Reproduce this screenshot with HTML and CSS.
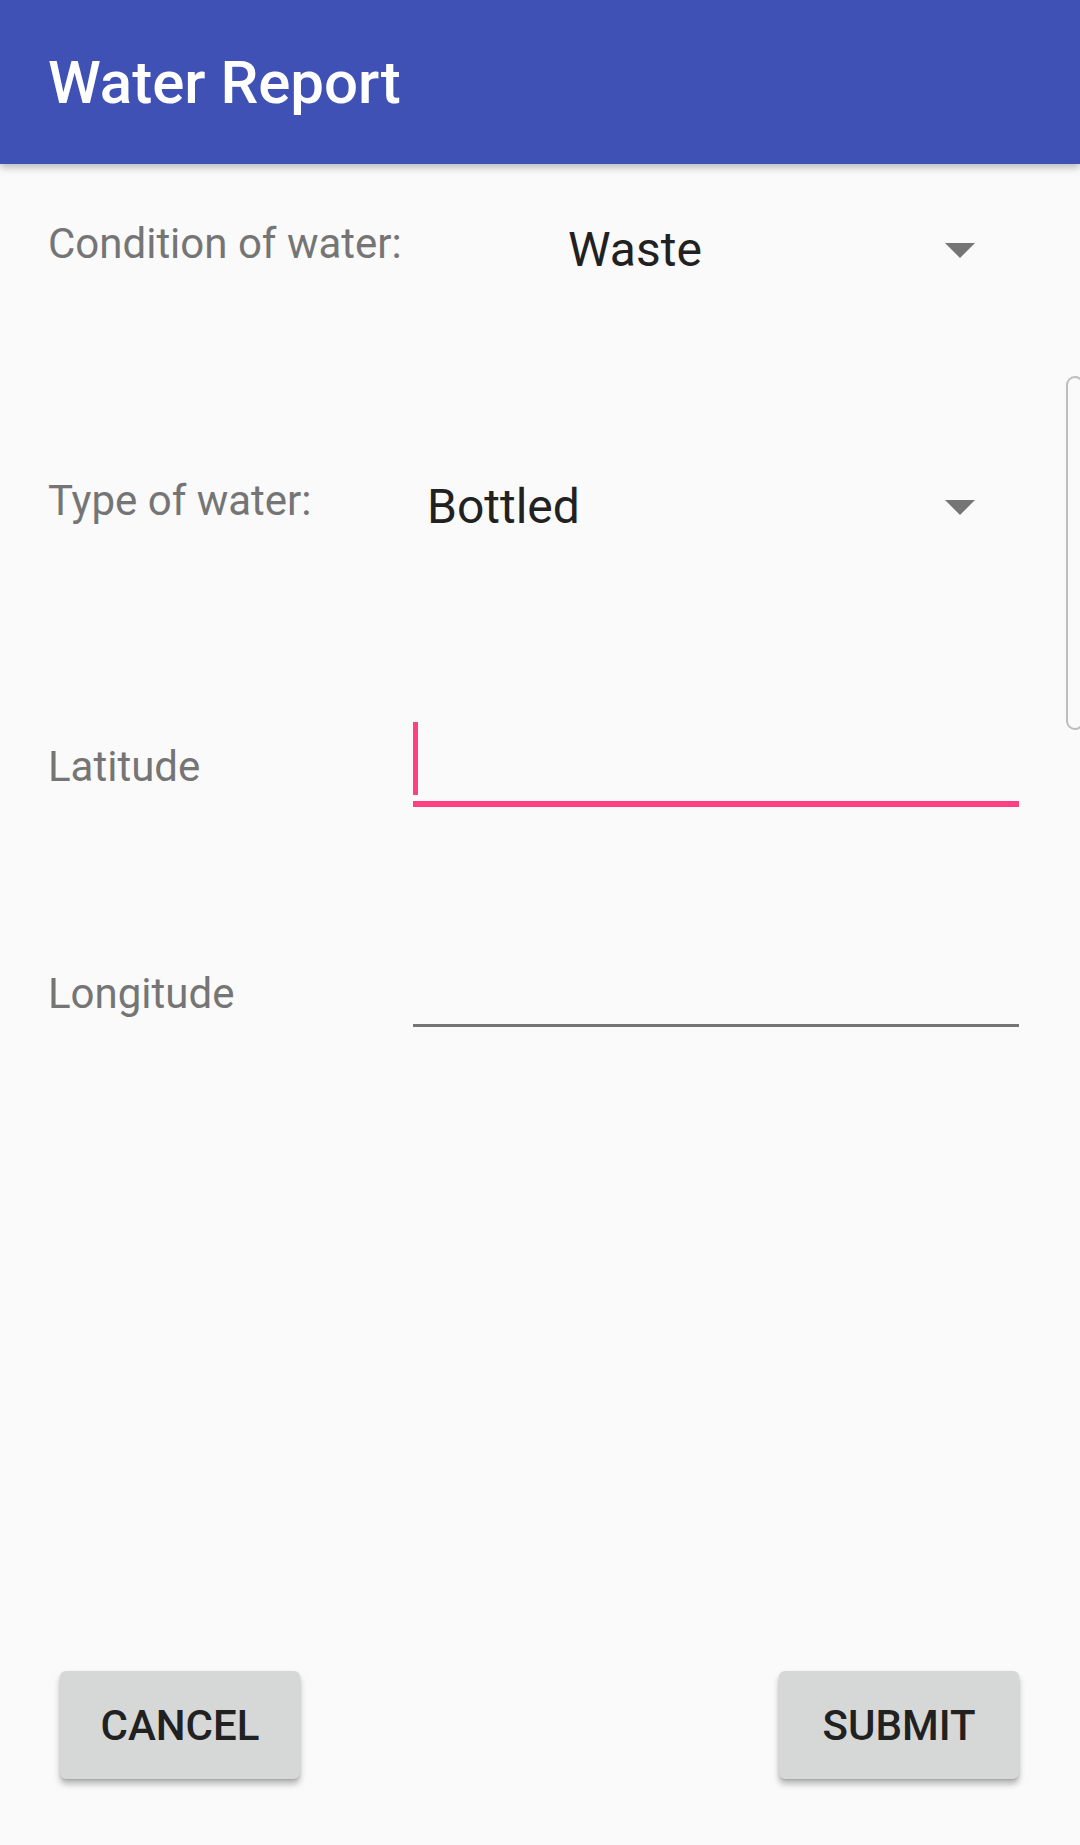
FILE: index.html
```html
<!DOCTYPE html>
<html lang="en">
<head>
<meta charset="utf-8">
<title>Water Report</title>
<link rel="stylesheet" href="styles.css">
</head>
<body>
<div class="screen">
  <header class="appbar">
    <h1 class="title">Water Report</h1>
  </header>
  <main class="form">
    <div class="row row-condition">
      <div class="label label-condition">Condition of water:</div>
      <div class="spinner">
        <span class="spinner-value">Waste</span>
        <span class="arrow"></span>
      </div>
    </div>
    <div class="row row-type">
      <div class="label label-type">Type of water:</div>
      <div class="spinner">
        <span class="spinner-value">Bottled</span>
        <span class="arrow"></span>
      </div>
    </div>
    <div class="row row-lat">
      <div class="label label-field">Latitude</div>
      <div class="field field-focused">
        <span class="cursor"></span>
      </div>
    </div>
    <div class="row row-lon">
      <div class="label label-field">Longitude</div>
      <div class="field field-idle"></div>
    </div>
  </main>
  <footer class="actions">
    <button class="btn">CANCEL</button>
    <button class="btn">SUBMIT</button>
  </footer>
  <div class="edge-handle"></div>
</div>
</body>
</html>
```
FILE: styles.css
```css
* { box-sizing: border-box; }
html, body {
  margin: 0;
  padding: 0;
  background: #fafafa;
}
body {
  font-family: Roboto, "Noto Sans", "Liberation Sans", sans-serif;
  color: #212121;
}
.screen {
  position: relative;
  width: 1080px;
  height: 1845px;
  display: flex;
  flex-direction: column;
  overflow: hidden;
}
.appbar {
  height: 164px;
  flex: none;
  background: #3f51b5;
  padding: 48px 0 0 48px;
  box-shadow: 0 3px 8px rgba(0, 0, 0, 0.28);
  position: relative;
  z-index: 1;
}
.title {
  margin: 0;
  font-size: 60px;
  line-height: 70px;
  font-weight: 500;
  color: #ffffff;
}
.form {
  padding-top: 55px;
  display: flex;
  flex-direction: column;
}
.row {
  display: flex;
  align-items: flex-start;
}
.row-condition { height: 257px; }
.row-type { height: 266px; }
.row-lat { height: 227px; }
.row-lon { height: 80px; }
.label {
  font-size: 42px;
  line-height: 49px;
  color: #757575;
  padding-left: 48px;
  flex: none;
}
.label-condition { width: 568px; }
.label-type { width: 427px; }
.label-field { width: 413px; }
.spinner {
  flex: 1;
  margin-top: 3px;
  margin-right: 105px;
  display: flex;
  align-items: center;
  justify-content: space-between;
}
.spinner-value {
  font-size: 48px;
  line-height: 56px;
  color: #212121;
}
.arrow {
  width: 0;
  height: 0;
  border-left: 15px solid transparent;
  border-right: 15px solid transparent;
  border-top: 15px solid #757575;
}
.field {
  flex: none;
  width: 606px;
}
.field-focused {
  margin-top: -20px;
  height: 85px;
  border-bottom: 6px solid #ff4081;
}
.cursor {
  display: block;
  width: 5px;
  height: 73px;
  background: #ff4081;
}
.field-idle {
  height: 58px;
  border-bottom: 3px solid #757575;
}
.actions {
  margin-top: auto;
  padding: 0 61px 66px 60px;
  display: flex;
  justify-content: space-between;
}
.btn {
  width: 240px;
  height: 108px;
  border: none;
  border-radius: 6px;
  background: #d6d7d7;
  font-family: Roboto, "Noto Sans", "Liberation Sans", sans-serif;
  font-size: 42px;
  font-weight: 500;
  color: #212121;
  padding: 0;
  box-shadow: 0 5px 6px rgba(0, 0, 0, 0.28), 0 1px 2px rgba(0, 0, 0, 0.12);
}
.edge-handle {
  position: absolute;
  right: -4px;
  top: 376px;
  width: 18px;
  height: 354px;
  border: 2px solid #bdbdbd;
  border-radius: 16px;
}
```
